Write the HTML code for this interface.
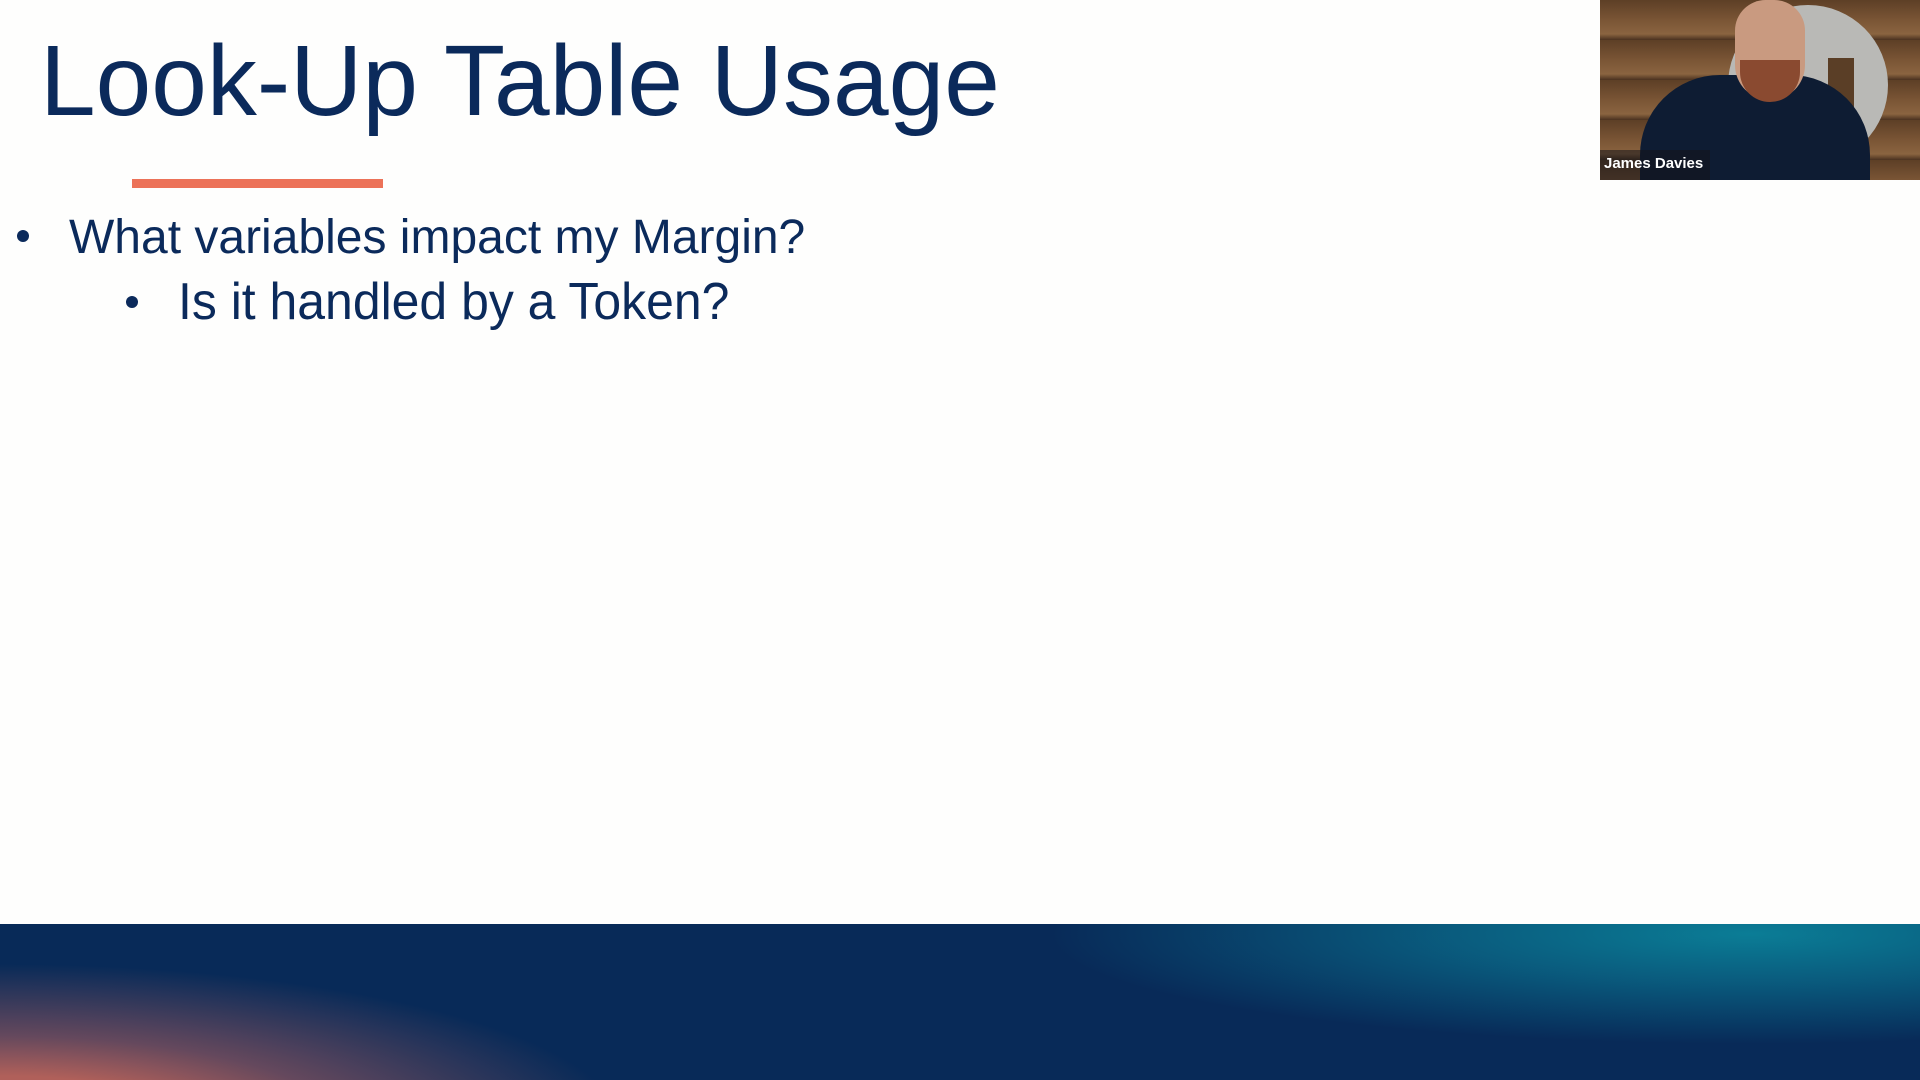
<!DOCTYPE html>
<html><head><meta charset="utf-8"><style>
body{margin:0;width:1920px;height:1080px;background:#fefefd;position:relative;overflow:hidden;font-family:"Liberation Sans",sans-serif;color:#0b2a5b}
.t{position:absolute;left:40px;top:21px;font-size:100px;line-height:120px;white-space:nowrap}
.bar{position:absolute;left:132px;top:179px;width:251px;height:9px;background:#ec7258}
.b1{position:absolute;left:69px;top:208px;font-size:48px;line-height:60px;white-space:nowrap}
.d{position:absolute;width:12px;height:12px;border-radius:50%;background:#0b2a5b}
.b2{position:absolute;left:178px;top:272px;font-size:52px;line-height:60px;white-space:nowrap;transform:scaleX(.96);transform-origin:left}
.band{position:absolute;left:0;top:924px;width:1920px;height:156px;background:
radial-gradient(ellipse 620px 160px at 0px 200px,#b3625a 0%,#b0605a 30%,rgba(140,85,95,.7) 55%,rgba(10,42,88,0) 100%),
radial-gradient(ellipse 700px 110px at 1750px 10px,#0b7d96 0%,rgba(10,110,140,.7) 45%,rgba(8,42,88,0) 100%),
#082a58}
.v{position:absolute;left:1600px;top:0;width:320px;height:180px;overflow:hidden;background:repeating-linear-gradient(180deg,#5d3f26 0,#7a5535 20px,#8a6440 34px,#4a3220 40px)}
</style></head><body>
<div class="t">Look-Up Table Usage</div>
<div class="bar"></div>
<div class="d" style="left:17px;top:230px"></div>
<div class="b1">What variables impact my Margin?</div>
<div class="d" style="left:126px;top:296px"></div>
<div class="b2">Is it handled by a Token?</div>
<div class="band"></div>
<div class="v">
<div style="position:absolute;left:128px;top:5px;width:160px;height:160px;border-radius:50%;background:#b9b9b6"></div>
<div style="position:absolute;left:228px;top:58px;width:26px;height:70px;background:#5a3e26"></div>
<div style="position:absolute;left:40px;top:75px;width:230px;height:140px;border-radius:80px 80px 0 0;background:#0e1c33"></div>
<div style="position:absolute;left:135px;top:0;width:70px;height:100px;border-radius:35px 35px 40px 40px;background:#c99a80"></div>
<div style="position:absolute;left:140px;top:60px;width:60px;height:42px;border-radius:0 0 30px 30px;background:#8a4a30"></div>
<div style="position:absolute;left:0;top:150px;width:110px;height:30px;background:rgba(20,20,25,.55)"></div>
<div style="position:absolute;left:4px;top:155px;color:#fff;font-size:15px;font-weight:bold">James Davies</div>
</div>
</body></html>
